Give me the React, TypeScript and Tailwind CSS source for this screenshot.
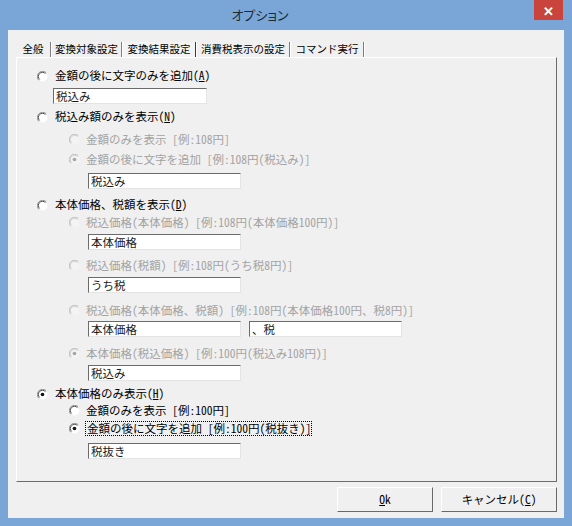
import { ReactNode } from "react"

const Radio = ({ checked = false, disabled = false }: { checked?: boolean; disabled?: boolean }) => {
  const outer = disabled ? "#b9b9b9" : "#8a8a8a"
  const inner = disabled ? "#cfcfcf" : "#404040"
  const dot = disabled ? "#a6a6a6" : "#151515"
  return (
    <svg width="11" height="11" viewBox="0 0 12 12" className="shrink-0">
      <circle cx="6" cy="6" r="5.4" fill={disabled ? "#f3f3f3" : "#ffffff"} />
      <path d="M1.9 10.1A5.8 5.8 0 0 1 10.1 1.9" fill="none" stroke={outer} strokeWidth="1" />
      <path d="M2.8 9.2A4.5 4.5 0 0 1 9.2 2.8" fill="none" stroke={inner} strokeWidth="1" />
      {checked && <circle cx="6" cy="6" r="2" fill={dot} />}
    </svg>
  )
}

const Field = ({ value, className = "" }: { value: string; className?: string }) => (
  <div
    className={`w-[153px] h-4 shrink-0 bg-white border border-t-[#6b6b6b] border-l-[#6b6b6b] border-r-[#e4e4e4] border-b-[#e4e4e4] pl-[2px] text-[11.5px] leading-[14px] text-[#1a1a1a] ${className}`}
  >
    {value}
  </div>
)

// top-level option in the panel
const Main = ({ children, checked, className = "" }: { children: ReactNode; checked?: boolean; className?: string }) => (
  <div className={`flex items-center h-4 pl-[20px] gap-[7px] ${className}`}>
    <Radio checked={checked} />
    <span className="text-[11.5px] leading-none text-black">{children}</span>
  </div>
)

// indented option
const Sub = ({
  children,
  checked,
  disabled,
  focus,
  className = "",
}: {
  children: ReactNode
  checked?: boolean
  disabled?: boolean
  focus?: boolean
  className?: string
}) => (
  <div className={`flex items-center h-4 pl-[52px] gap-[6px] ${className}`}>
    <Radio checked={checked} disabled={disabled} />
    <span
      className={`text-[11.5px] leading-[13px] whitespace-pre ${disabled ? "text-[#a3a3a3]" : "text-black"} ${
        focus ? "outline-1 outline-dotted outline-black" : ""
      }`}
    >
      {children}
    </span>
  </div>
)

const tabs = [
  { label: "全般", w: "w-[34px]" },
  { label: "変換対象設定", w: "w-[69px]" },
  { label: "変換結果設定", w: "w-[72px]", active: true },
  { label: "消費税表示の設定", w: "w-[92px]" },
  { label: "コマンド実行", w: "w-[72px]" },
]

export default function App() {
  return (
    <div className="w-[572px] h-[526px] overflow-hidden bg-[#79a6d6] flex flex-col font-['Noto_Sans_CJK_JP','Noto_Sans',sans-serif] [font-feature-settings:'hwid']">
      <div className="h-[30px] flex shrink-0">
        <div className="flex-1 flex items-center justify-center pr-[14px] text-[13px] text-[#1e2a36] [font-feature-settings:'palt']">
          オプション
        </div>
        <div className="w-[29px] h-[20px] mr-[9px] bg-[#c8443c] flex items-center justify-center text-white text-[13px] font-bold leading-none">
          ✕
        </div>
      </div>

      <div className="mx-[8px] h-[488px] bg-[#f0f0f0] flex flex-col">
        <div className="mt-[12px] ml-[8px] h-[15px] flex items-stretch">
          {tabs.map((t) => (
            <div key={t.label} className="flex items-stretch">
              <div
                className={`${t.w} flex items-center justify-center text-[10.5px] leading-none text-black ${
                  t.active ? "bg-[#f4f4f4]" : ""
                }`}
              >
                {t.label}
              </div>
              <div className="w-[2px] flex">
                <div className={`w-px ${t.active ? "bg-[#3a3a3a]" : "bg-[#7d7d7d]"}`} />
                <div className="w-px bg-white" />
              </div>
            </div>
          ))}
        </div>

        <div className="ml-[8px] w-[541px] h-[425px] border border-t-white border-l-white border-r-[#6b6b6b] border-b-[#6b6b6b] flex flex-col pt-[10px]">
          <Main>
            金額の後に文字のみを追加(<u>A</u>)
          </Main>
          <Field value="税込み" className="mt-[4px] ml-[36px] w-[154px]" />

          <Main className="mt-[5px]">
            税込み額のみを表示(<u>N</u>)
          </Main>
          <Sub disabled className="mt-[6px]">
            金額のみを表示 [例:108円]
          </Sub>
          <Sub disabled checked className="mt-[4px]">
            金額の後に文字を追加 [例:108円(税込み)]
          </Sub>
          <Field value="税込み" className="mt-[6px] ml-[71px]" />

          <Main className="mt-[8px]">
            本体価格、税額を表示(<u>D</u>)
          </Main>
          <Sub disabled className="mt-[1px]">
            税込価格(本体価格) [例:108円(本体価格100円)]
          </Sub>
          <Field value="本体価格" className="mt-[4px] ml-[71px]" />
          <Sub disabled className="mt-[7px]">
            税込価格(税額) [例:108円(うち税8円)]
          </Sub>
          <Field value="うち税" className="mt-[4px] ml-[71px]" />
          <Sub disabled className="mt-[9px]">
            税込価格(本体価格、税額) [例:108円(本体価格100円、税8円)]
          </Sub>
          <div className="mt-[3px] ml-[71px] flex gap-[8px]">
            <Field value="本体価格" />
            <Field value="、税" />
          </div>
          <Sub disabled checked className="mt-[8px]">
            本体価格(税込価格) [例:100円(税込み108円)]
          </Sub>
          <Field value="税込み" className="mt-[4px] ml-[71px]" />

          <Main checked className="mt-[5px]">
            本体価格のみ表示(<u>H</u>)
          </Main>
          <Sub className="mt-0">金額のみを表示 [例:100円]</Sub>
          <Sub checked focus className="mt-[2px] gap-[5px]">
            <span className="pl-px">金額の後に文字を追加 [例:100円(税抜き)]</span>
          </Sub>
          <Field value="税抜き" className="mt-[7px] ml-[71px]" />
        </div>

        <div className="mt-[5px] mr-[7px] flex justify-end gap-[8px]">
          <div className="w-[96px] h-[25px] flex items-center justify-center bg-[#f0f0f0] border border-t-white border-l-white border-r-[#696969] border-b-[#696969] text-[11.5px] leading-none text-black">
            <span>
              <u>O</u>k
            </span>
          </div>
          <div className="w-[116px] h-[25px] flex items-center justify-center bg-[#f0f0f0] border border-t-white border-l-white border-r-[#696969] border-b-[#696969] text-[11.5px] leading-none text-black">
            <span>
              キャンセル(<u>C</u>)
            </span>
          </div>
        </div>
      </div>
    </div>
  )
}
